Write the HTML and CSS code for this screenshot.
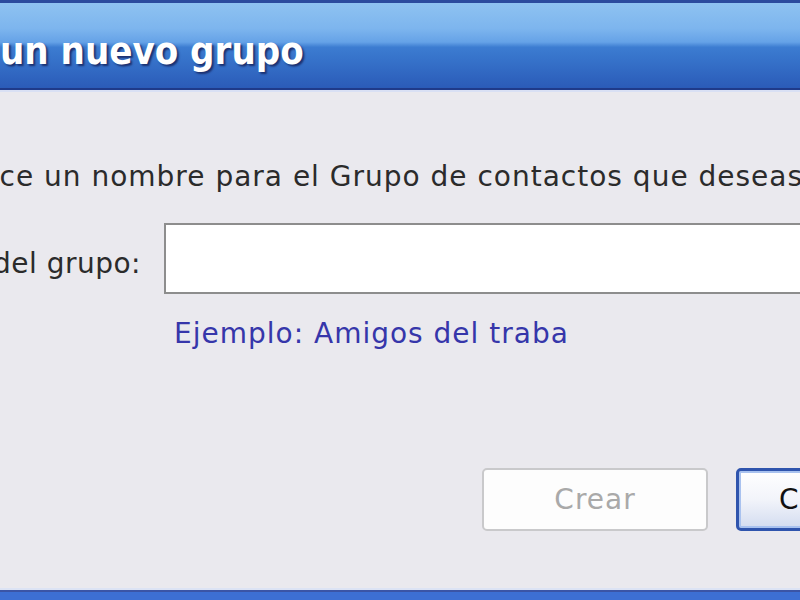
FILE: index.html
```html
<!DOCTYPE html>
<html lang="es">
	<head>
		<meta charset="UTF-8">
		<title>Crear un nuevo grupo</title>
		<link rel="stylesheet" href="styles.css">
	</head>
	<body>
		<div class="window">
			<div class="titlebar">
				<span class="title">Crear un nuevo grupo</span>
			</div>
			<div class="client">
				<p class="intro">Introduce un nombre para el Grupo de contactos que deseas crear.</p>
				<div class="field">
					<label class="field-label" for="groupname">Nombre del grupo:</label>
					<input class="field-input" id="groupname" type="text">
				</div>
				<p class="hint">Ejemplo: Amigos del trabajo</p>
				<div class="buttons">
					<button class="btn" disabled>Crear</button>
					<button class="btn btn-default">Cancelar</button>
				</div>
			</div>
			<div class="frame-bottom"></div>
		</div>
	</body>
</html>
```

FILE: styles.css
```css
html, body { margin: 0; padding: 0; width: 800px; height: 600px; overflow: hidden; }
body { background: #eae9ee; font-family: "DejaVu Sans", sans-serif; font-size: 28px; letter-spacing: 1px; color: #2b2b2b; }

.window { display: flex; flex-direction: column; height: 600px; }

/* title bar */
.titlebar {
	height: 85px;
	border-top: 3px solid #2b4b9e;
	border-bottom: 2px solid #1f3a8a;
	box-shadow: 0 2px 0 #d9e0f4;
	background: linear-gradient(to bottom, #8ec2f1 0%, #7db5ee 30%, #65a2e7 46%, #3c7cd1 52%, #3570c8 70%, #2b5bb8 100%);
	display: flex;
	align-items: center;
	overflow: hidden;
	white-space: nowrap;
}
.title {
	margin: 10px 0 0 -117px;
	font-family: "DejaVu Sans Condensed", "DejaVu Sans", sans-serif;
	font-size: 38px;
	font-weight: bold;
	letter-spacing: 0;
	color: #fff;
	text-shadow: 2px 2px 2px #1b3070;
}

/* dialog body */
.client { flex: 1; overflow: hidden; white-space: nowrap; }
.intro { margin: 70px 0 0 -108px; }

.field { display: flex; align-items: center; margin-top: 30px; }
.field-label { flex: none; width: 341px; margin-left: -200px; padding-top: 10px; text-align: right; letter-spacing: 0.5px; }
.field-input {
	flex: none;
	margin-left: 23px;
	width: 700px;
	height: 71px;
	box-sizing: border-box;
	border: 2px solid #8d8d8d;
	background: #fff;
	outline: none;
}

/* the static control is narrower than its text, so it cuts it */
.hint { width: 393px; overflow: hidden; margin: 23px 0 0 174px; color: #3636aa; }

.buttons { display: flex; gap: 28px; margin: 118px 0 0 482px; }
.btn {
	flex: none;
	width: 226px;
	height: 63px;
	box-sizing: border-box;
	font-family: inherit;
	font-size: 28px;
	letter-spacing: 1px;
	border-radius: 5px;
	border: 2px solid #c9c9cb;
	background: #fdfdfd;
	color: #a9a9a9;
}
.btn-default {
	border: 3px solid #2f54ad;
	background: linear-gradient(to bottom, #ffffff 0%, #f2f4fa 50%, #d3dcf0 100%);
	box-shadow: inset 0 0 0 2px #a9c2ef;
	color: #111;
	text-align: left;
	padding-left: 40px;
}

.frame-bottom {
	height: 8px;
	border-top: 2px solid #3b55a6;
	box-shadow: 0 -2px 0 #dce3f4;
	background: #3d6fd3;
}
```
